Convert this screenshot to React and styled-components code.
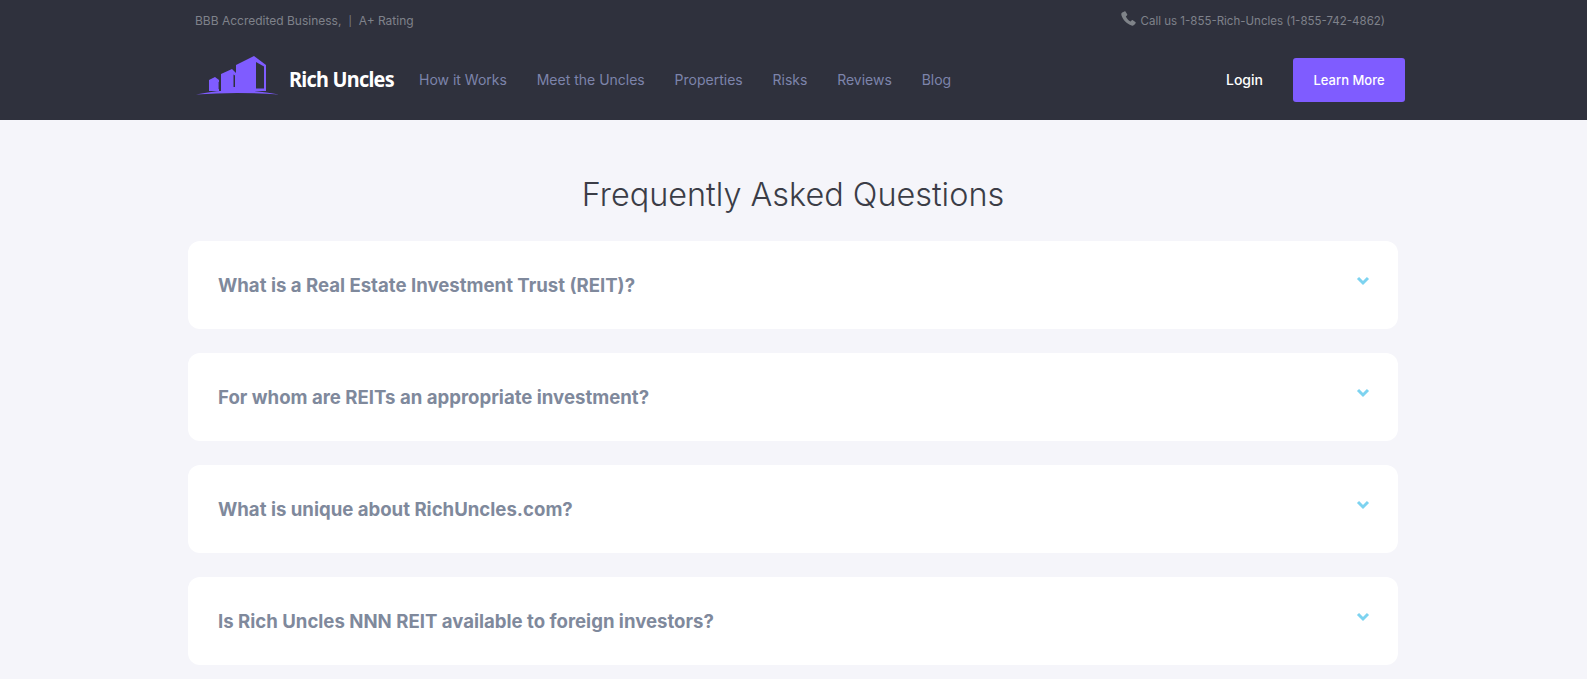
import React from "react"
import styled, { createGlobalStyle } from "styled-components"

const GlobalStyle = createGlobalStyle`
  html, body {
    margin: 0;
    padding: 0;
    background: #f5f5fa;
    font-family: Inter, "Liberation Sans", sans-serif;
    overflow: hidden;
  }
`

const Page = styled.div`
  height: 679px;
  overflow: hidden;
`

const Header = styled.header`
  height: 120px;
  background: #2f313d;
  box-sizing: border-box;
  padding: 0 182px 0 195px;
`

const TopBar = styled.div`
  height: 41px;
  display: flex;
  justify-content: space-between;
  align-items: center;
  font-size: 12px;
  color: #7f828b;
`

const Divider = styled.span`
  margin: 0 7px;
  font-size: 10px;
`

const Phone = styled.div`
  display: flex;
  align-items: center;
  gap: 5px;
  font-size: 11.5px;
  margin-right: 20px;
  svg {
    margin-top: -4px;
  }
`

const MainBar = styled.div`
  height: 77px;
  display: flex;
  align-items: center;
`

const Brand = styled.div`
  display: flex;
  align-items: center;
  width: 224px;
  svg {
    margin-bottom: 10px;
  }
`

const BrandName = styled.span`
  margin: 0 0 4px 8px;
  font-family: "Noto Sans", sans-serif;
  font-size: 22px;
  font-weight: 700;
  letter-spacing: -0.8px;
  color: #fff;
  transform: scaleX(0.9);
  transform-origin: left center;
  white-space: nowrap;
`

const Nav = styled.nav`
  display: flex;
  gap: 29.8px;
  flex: 1;
`

const NavLink = styled.a`
  font-size: 14px;
  color: #7d84ab;
`

const Login = styled.a`
  font-size: 14px;
  font-weight: 500;
  color: #fff;
  margin-right: 30px;
`

const LearnMore = styled.a`
  width: 112px;
  height: 44px;
  display: flex;
  align-items: center;
  justify-content: center;
  border-radius: 3px;
  background: #7f5cff;
  color: #fff;
  font-size: 13px;
  font-weight: 500;
`

const Content = styled.main`
  padding: 0 189px 0 188px;
`

const Title = styled.h1`
  margin: 0;
  padding-top: 55px;
  height: 66px;
  font-size: 32.4px;
  line-height: 40px;
  font-weight: 300;
  text-align: center;
  color: #3b3d47;
`

const Card = styled.section`
  height: 88px;
  margin-bottom: 24px;
  background: #fff;
  border-radius: 12px;
  padding: 0 28px 0 30px;
  display: flex;
  justify-content: space-between;
  align-items: center;
`

const Question = styled.h3`
  margin: 0;
  font-size: 18.6px;
  font-weight: 700;
  color: #7f899c;
`

const Chevron = styled.svg`
  width: 14px;
  height: 10px;
  margin-bottom: 9px;
`

const questions = [
  "What is a Real Estate Investment Trust (REIT)?",
  "For whom are REITs an appropriate investment?",
  "What is unique about RichUncles.com?",
  "Is Rich Uncles NNN REIT available to foreign investors?",
]

function Logo() {
  return (
    <svg width="86" height="42" viewBox="0 0 86 42" fill="#7f5cff">
      <path d="M1 40.5Q42 32 84 40.5Q42 37.5 1 40.5Z" />
      <path d="M14 37V26L20 23L24 26V37Z" />
      <path d="M26 37V20L37 15L41 19V37Z" />
      <path d="M41 37V11L59 2L71 11V37Z" />
      <g fill="#2f313d">
        <path d="M23.6 28H24.8V35H23.6Z" />
        <path d="M38.5 20.5L40 21.5V33H38.5Z" />
        <path d="M61 8L69 12.5V34.5H61Z" />
      </g>
    </svg>
  )
}

function PhoneIcon() {
  return (
    <svg width="15" height="15" viewBox="0 0 15 15" fill="#7f8389">
      <path d="M3.4 0.4L1.2 1.6C0.2 2.3 0.1 3.4 0.6 4.8C2 8.8 5.6 12.8 10.6 14.5C11.8 14.9 12.8 14.6 13.6 13.6L14.6 12.2C14.9 11.8 14.8 11.3 14.4 11L11.8 9.2C11.4 8.9 10.9 9 10.6 9.4L9.6 10.6C7.6 9.6 5.8 7.6 4.8 5.4L5.9 4.4C6.3 4.1 6.4 3.6 6.2 3.2L4.6 0.7C4.3 0.3 3.8 0.2 3.4 0.4Z" />
    </svg>
  )
}

export default function App() {
  return (
    <Page>
      <GlobalStyle />
      <Header>
        <TopBar>
          <div>
            BBB Accredited Business,<Divider>|</Divider>A+ Rating
          </div>
          <Phone>
            <PhoneIcon />
            Call us 1-855-Rich-Uncles (1-855-742-4862)
          </Phone>
        </TopBar>
        <MainBar>
          <Brand>
            <Logo />
            <BrandName>Rich Uncles</BrandName>
          </Brand>
          <Nav>
            <NavLink>How it Works</NavLink>
            <NavLink>Meet the Uncles</NavLink>
            <NavLink>Properties</NavLink>
            <NavLink>Risks</NavLink>
            <NavLink>Reviews</NavLink>
            <NavLink>Blog</NavLink>
          </Nav>
          <Login>Login</Login>
          <LearnMore>Learn More</LearnMore>
        </MainBar>
      </Header>
      <Content>
        <Title>Frequently Asked Questions</Title>
        {questions.map((q) => (
          <Card key={q}>
            <Question>{q}</Question>
            <Chevron viewBox="0 0 14 10">
              <path d="M2 2L7 7L12 2" fill="none" stroke="#7dd3f0" strokeWidth="3" />
            </Chevron>
          </Card>
        ))}
      </Content>
    </Page>
  )
}
